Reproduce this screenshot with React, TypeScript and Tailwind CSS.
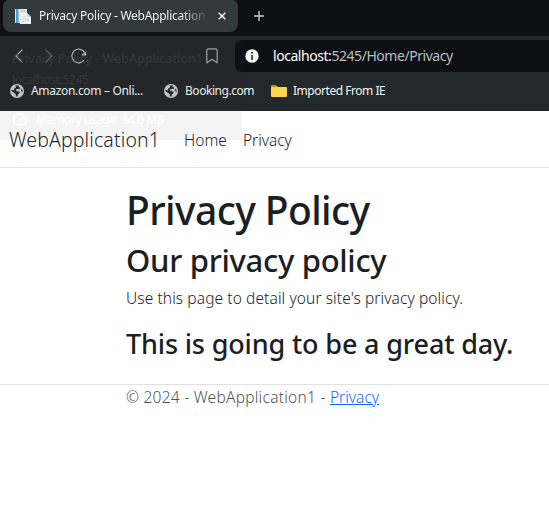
import type { ReactNode } from "react";

function Globe() {
  return (
    <svg className="h-[14px] w-[14px] shrink-0" viewBox="0 0 14 14">
      <circle cx="7" cy="7" r="7" fill="#c9cccd" />
      <path d="M5.5 1.5 9 1.6 8.6 3 10.3 3.6 9.4 5.3 7.4 4.8 5.9 5.8 6.6 7.2 9.3 7.4 9.6 9 8 10.2 7.4 12.6 5.8 12.5 5.9 10.4 4.6 9.2 1.5 7.3 1.4 5.9 3.9 6.2 4.3 4.4 6 3.6ZM11.2 4.2 12.5 6 12.6 8 11.2 7.2Z" fill="#23282b" />
    </svg>
  );
}

function Bookmark({ icon, children, className }: { icon: ReactNode; children: ReactNode; className: string }) {
  return (
    <div className={`flex shrink-0 items-center text-[12px] leading-4 text-[#f3f4f4] ${className}`}>
      {icon}
      <span>{children}</span>
    </div>
  );
}

function TabStrip() {
  return (
    <div className="flex h-[36px] bg-[#0e0f13]">
      <div className="ml-[3px] flex h-[32px] w-[235px] items-center rounded-b-[8px] rounded-t-[6px] bg-[#323a3d] pl-[12px]">
        <svg className="h-[17px] w-[17px] shrink-0" viewBox="0 0 17 17">
          <path d="M0 1h12v14H0z" fill="#dce5eb" />
          <path d="M1 1h2.5v14H1z" fill="#4f9fd2" />
          <path d="M6 3h4" stroke="#b6c2ca" />
          <path d="M5 5h7l4 4v7H5z" fill="#f0f2f3" />
          <path d="M12 5v4h4" fill="#d1d5d7" />
          <path d="M7 9h4M7 11h7M7 13h7" stroke="#d5d9db" />
        </svg>
        <div className="ml-[7px] w-[166px] overflow-hidden bg-gradient-to-r from-white from-85% to-[#50585b] bg-clip-text text-[12px] leading-4 tracking-[-0.26px] text-transparent">
          Privacy Policy - WebApplication1
        </div>
        <svg className="ml-[13px] h-[8px] w-[8px] shrink-0" viewBox="0 0 8 8" fill="none" stroke="#f4f5f5" strokeWidth="1.5">
          <path d="m.7.7 6.6 6.6M7.3.7.7 7.3" />
        </svg>
      </div>
      <svg className="ml-[16px] mt-[11px] h-[10px] w-[10px]" viewBox="0 0 10 10" fill="none" stroke="#c8cacc" strokeWidth="1.4">
        <path d="M5 0v10M0 5h10" />
      </svg>
    </div>
  );
}

function Toolbar() {
  return (
    <div className="flex h-[40px] items-center bg-[#23282b]">
      <svg className="ml-[15px] h-[14px] w-[8px]" viewBox="0 0 8 14" fill="none" stroke="#abb6bc" strokeWidth="1.2">
        <path d="M7.4.6 1 7l6.4 6.4" />
      </svg>
      <svg className="ml-[22px] h-[14px] w-[8px]" viewBox="0 0 8 14" fill="none" stroke="#666f74" strokeWidth="1.2">
        <path d="M.6.6 7 7 .6 13.4" />
      </svg>
      <svg className="ml-[18px] h-[16px] w-[16px]" viewBox="0 0 16 16" fill="none" stroke="#abb6bc" strokeWidth="1.3">
        <path d="M13 12.2A6.8 6.8 0 1 1 13.6 4.6" />
        <path d="M15.2 3v4.6h-4.6Q10.4 5.6 12.4 5.6 14 5.2 15.2 3" fill="#abb6bc" stroke="none" />
      </svg>
      <svg className="ml-[119px] h-[16px] w-[12px]" viewBox="0 0 12 16" fill="none" stroke="#9ca7ac" strokeWidth="1.2">
        <path d="M.8 2.5Q.8.8 2.5.8h7q1.7 0 1.7 1.7v12.3L6 11.2.8 14.8Z" strokeLinejoin="round" />
      </svg>
      <div className="ml-[17px] flex h-[32px] flex-1 items-center rounded-l-[7px] bg-[#0e0f13] pl-[10px]">
        <svg className="h-[14px] w-[14px]" viewBox="0 0 14 14">
          <circle cx="7" cy="7" r="6.7" fill="#f4f4f5" />
          <path d="M6.2 3h1.7v1.7H6.2zM6.2 6h1.7v5H6.2z" fill="#34363a" />
        </svg>
        <div className="ml-[14px] text-[14px] leading-5 tracking-[-0.45px] text-[#b9bdc1]">
          <span className="text-white">localhost:</span>5245/Home/Privacy
        </div>
      </div>
    </div>
  );
}

function MemoryTooltip() {
  return (
    <div className="pointer-events-none absolute left-0 top-[36px] h-[104px] w-[242px] rounded-[4px] bg-[#23282b]/5 text-[12px]">
      <div className="ml-[12px] mt-[13px] whitespace-nowrap text-[13px] font-medium leading-[18px] tracking-[-0.28px] text-[#3c4245]/60">Privacy Policy - WebApplication1</div>
      <div className="ml-[12px] mt-[5px] leading-4 tracking-[-0.35px] text-[#3c4245]/60">localhost:5245</div>
      <div className="ml-[13px] mt-[24px] flex items-center text-white">
        <svg className="h-[14px] w-[14px]" viewBox="0 0 14 14" fill="none" stroke="currentColor" strokeWidth="1.5">
          <path d="M9.5 2.2A5.8 5.8 0 0 0 2.5 11.5h9A5.8 5.8 0 0 0 12.3 5M6.5 8l5-4.8" />
        </svg>
        <span className="ml-[9px] font-medium leading-4 tracking-[-0.48px]">Memory usage: 34.0 MB</span>
      </div>
    </div>
  );
}

export default function App() {
  return (
    <div className="relative h-[518px] w-[549px] overflow-hidden whitespace-nowrap bg-white font-['Noto_Sans','Open_Sans',sans-serif] text-[#212529]">
      <TabStrip />
      <Toolbar />
      <div className="flex h-[35px] items-center bg-[#23282b] pb-[6px] pl-[10px]">
        <Bookmark icon={<Globe />} className="w-[154px] gap-[7px] tracking-[-0.32px]">Amazon.com – Onli...</Bookmark>
        <Bookmark icon={<Globe />} className="w-[107px] gap-[7px] tracking-[-0.45px]">Booking.com</Bookmark>
        <Bookmark
          icon={
            <svg className="h-[14px] w-[16px]" viewBox="0 0 16 14">
              <path d="M0 2Q0 1 1 1h4l2 2h8v3H0Z" fill="#c58d1d" />
              <path d="M1 3h14q1 0 1 1v8q0 1-1 1H1q-1 0-1-1V4q0-1 1-1" fill="#ffd451" />
            </svg>
          }
          className="gap-[6px] tracking-[-0.47px]"
        >
          Imported From IE
        </Bookmark>
      </div>
      <MemoryTooltip />
      <nav className="relative flex h-[57px] items-center border-b border-[#dee2e6] pl-[9px] pt-[2px]">
        <div className="w-[175px] text-[19.5px] font-light leading-[30px] tracking-[0.13px]">WebApplication1</div>
        <div className="w-[59px] text-[15.5px] font-light leading-6 tracking-[0.05px]">Home</div>
        <div className="text-[15.5px] font-light leading-6 tracking-[-0.05px]">Privacy</div>
      </nav>
      <main className="pl-[126px] text-[#1b1f23]">
        <h1 className="mt-[18px] text-[39px] font-medium leading-[48px] tracking-[-0.6px]">Privacy Policy</h1>
        <h2 className="mt-[7px] text-[31px] font-medium leading-[38px] tracking-[-0.3px]">Our privacy policy</h2>
        <p className="mt-[7px] text-[15.5px] font-light leading-6 tracking-[0.1px] text-[#212529]">Use this page to detail your site's privacy policy.</p>
        <h3 className="mt-[17px] text-[27px] font-medium leading-[34px] tracking-[-0.16px]">This is going to be a great day.</h3>
      </main>
      <footer className="mt-[23px] border-t border-[#dee2e6] pl-[126px] text-[15.5px] font-light leading-6 tracking-[0.26px] text-[#4d5359]">
        © 2024 - WebApplication1 - <a className="tracking-[0px] text-[#0d6efd] underline">Privacy</a>
      </footer>
    </div>
  );
}
